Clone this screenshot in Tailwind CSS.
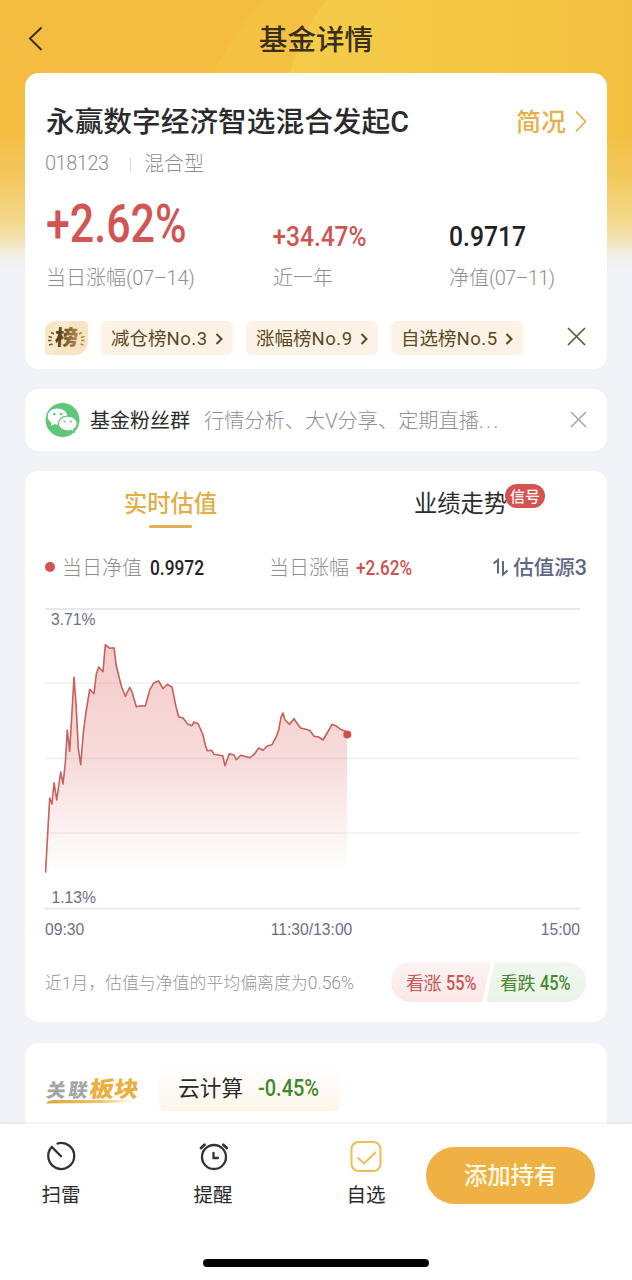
<!DOCTYPE html>
<html lang="zh-CN">
<head>
    <meta charset="UTF-8">
    <meta name="viewport" content="width=device-width, initial-scale=1.0">
    <title>基金详情</title>
    <script src="https://cdn.jsdelivr.net/npm/@tailwindcss/browser@4"></script>
</head>
<body class="bg-[#f2f3f9] font-[Roboto,'Noto_Sans_CJK_SC',sans-serif] text-[#2b2b2d]">
    <div class="relative flex h-[1280px] w-[632px] flex-col overflow-hidden">
        <!-- Header background -->
        <svg class="absolute inset-x-0 top-0 -z-10" width="632" height="270" viewBox="0 0 632 270">
            <defs>
                <linearGradient id="sheen" x1="0" x2="1">
                    <stop offset="0" stop-color="#f5cb49"/>
                    <stop offset=".5" stop-color="#f4c845"/>
                    <stop offset="1" stop-color="#f3bf40"/>
                </linearGradient>
                <linearGradient id="fade" x1="0" x2="0" y1="0" y2="1">
                    <stop offset="0" stop-color="#f2f3f9" stop-opacity="0"/>
                    <stop offset=".3" stop-color="#f3e3a8" stop-opacity=".25"/>
                    <stop offset=".65" stop-color="#f3e0a0" stop-opacity=".8"/>
                    <stop offset=".9" stop-color="#f2efe6"/>
                    <stop offset="1" stop-color="#f2f3f9"/>
                </linearGradient>
            </defs>
            <rect width="632" height="270" fill="#f4bd41"/>
            <path d="M266 0Q230 35 214 73V270H632V0Z" fill="#f5c143"/>
            <path d="M326 0Q300 35 290 73V270H632V0Z" fill="url(#sheen)"/>
            <rect y="135" width="632" height="135" fill="url(#fade)"/>
        </svg>

        <!-- Header -->
        <header class="grid h-[73px] shrink-0 grid-cols-3 items-center px-7 pt-1 text-[#38301b]">
            <svg width="16" height="26" viewBox="0 0 16 26" fill="none" stroke="currentColor" stroke-width="2"><path d="M13.500 1.500 2 12.500l11.500 11.500"/></svg>
            <h1 class="pt-1.5 text-center text-[28.500px] leading-none font-medium whitespace-nowrap">基金详情</h1>
        </header>

        <!-- Fund summary -->
        <section class="mx-[25px] flex h-[296px] shrink-0 flex-col rounded-[14px] bg-white px-[21px] pt-[31px]">
            <div class="flex h-9 items-center justify-between">
                <h2 class="text-[28.700px] leading-none font-medium whitespace-nowrap">永赢数字经济智选混合发起C</h2>
                <div class="flex items-center gap-2 text-[#e6b04a]">
                    <span class="text-[25px] leading-none font-medium">简况</span>
                    <svg class="-mr-0.5" width="14" height="22" viewBox="0 0 14 22" fill="none" stroke="currentColor" stroke-width="1.800"><path d="m2 .5 9.500 10-9.500 10"/></svg>
                </div>
            </div>
            <div class="mt-3 flex h-6 items-center text-[20px] leading-none font-light text-[#8f8f8f]">
                <span class="-ml-px w-[85px] pb-0.5 text-[20px] tracking-[-.5px]">018123</span>
                <span class="mr-[13px] h-[15px] w-px bg-[#dddddd]"></span>
                <span>混合型</span>
            </div>
            <div class="mt-[22px] grid h-[48px] grid-cols-[227px_176px_1fr] items-end">
                <svg class="overflow-visible" width="145" height="46" viewBox="0 0 145 46"><text x="0" y="41.500" class="fill-[#d35552] text-[53px] font-medium" textLength="140.500" lengthAdjust="spacingAndGlyphs">+2.62%</text></svg>
                <svg class="overflow-visible" width="100" height="30" viewBox="0 0 100 30"><text x="-.5" y="30" class="fill-[#cf5553] text-[28px] font-medium" textLength="94" lengthAdjust="spacingAndGlyphs">+34.47%</text></svg>
                <svg class="overflow-visible" width="90" height="30" viewBox="0 0 90 30"><text x="0" y="29.500" class="fill-[#222224] text-[28px] font-medium" textLength="77" lengthAdjust="spacingAndGlyphs">0.9717</text></svg>
            </div>
            <div class="mt-[20px] grid h-6 grid-cols-[227px_176px_1fr] items-center text-[20px] leading-none font-light whitespace-nowrap text-[#8f8f8f]">
                <span>当日涨幅<span class="tracking-[-.25px]">(07–14)</span></span>
                <span>近一年</span>
                <span>净值<span class="tracking-[-.7px]">(07–11)</span></span>
            </div>
            <div class="mt-[31px] flex h-[34px] items-center gap-[13px] text-[18.500px] leading-none text-[#5e4922]">
                <svg class="-ml-px" width="43" height="34" viewBox="0 0 43 34">
                    <defs><linearGradient id="rank"><stop stop-color="#4a3216"/><stop offset="1" stop-color="#b58a4c"/></linearGradient></defs>
                    <path d="M12 0H38Q43 0 43 5V18Q43 34 29 34H5Q0 34 0 29V12Q0 0 12 0Z" fill="#f8e4c0"/>
                    <path d="M14 0 0 18V29Q0 34 5 34H8L26 0Z" fill="#faebd0"/>
                    <text x="11" y="24.500" class="text-[21px] font-black" fill="url(#rank)" transform="skewX(-3)" textLength="23" lengthAdjust="spacingAndGlyphs">榜</text>
                    <g fill="none" stroke="#765526" stroke-width="1.400"><path d="M6 11.500l3 1.500M3.500 15.500l3.500 1M3 19.500h3.500M4 24l3.500-1"/><path d="M37 11.500l-3 1.500M39.500 15.500l-3.500 1M39.500 19.500H36M38.500 24l-3-1" stroke="#b08a50"/></g>
                </svg>
                <div class="flex h-full w-[132px] items-center justify-between rounded-md bg-[#fcf3e6] pt-0.5 pr-[9px] pl-[10px] whitespace-nowrap">
                    <span>减仓榜<span class="tracking-[.5px]">No.3</span></span>
                    <svg width="9" height="14" viewBox="0 0 9 14" fill="none" stroke="currentColor" stroke-width="2"><path d="m1.500 2 5 5-5 5"/></svg>
                </div>
                <div class="flex h-full w-[132px] items-center justify-between rounded-md bg-[#fcf3e6] pt-0.5 pr-[9px] pl-[10px] whitespace-nowrap">
                    <span>涨幅榜<span class="tracking-[.5px]">No.9</span></span>
                    <svg width="9" height="14" viewBox="0 0 9 14" fill="none" stroke="currentColor" stroke-width="2"><path d="m1.500 2 5 5-5 5"/></svg>
                </div>
                <div class="flex h-full w-[132px] items-center justify-between rounded-md bg-[#fcf3e6] pt-0.5 pr-[9px] pl-[10px] whitespace-nowrap">
                    <span>自选榜<span class="tracking-[.5px]">No.5</span></span>
                    <svg width="9" height="14" viewBox="0 0 9 14" fill="none" stroke="currentColor" stroke-width="2"><path d="m1.500 2 5 5-5 5"/></svg>
                </div>
                <svg class="mb-1 ml-auto" width="19" height="19" viewBox="0 0 19 19" fill="none" stroke="#6b5330" stroke-width="1.700"><path d="m1 1 17 17M18 1 1 18"/></svg>
            </div>
        </section>

        <!-- Fan group -->
        <section class="mx-[25px] mt-5 flex h-[62px] shrink-0 items-center rounded-[14px] bg-white px-[20px] text-[20px] leading-none whitespace-nowrap">
            <svg width="35" height="35" viewBox="0 0 35 35">
                <circle cx="17.500" cy="17" r="17" fill="#5fc878"/>
                <path d="M12.500 5.500C7 5.500 2.700 9 2.700 13.500c0 2.600 1.400 4.800 3.700 6.300l-.5 3.200 3.600-1.900c1.100.4 1.900.5 3.100.5 5.600 0 9.700-3.500 9.700-8S18.100 5.500 12.500 5.500Z" fill="#fff"/>
                <path d="M22.800 13.100c-5.500 0-9.500 3.400-9.500 7.500s4 7.400 9.500 7.400c1.200 0 2.300-.2 3.300-.5l3.200 1.700-.7-2.900c2.200-1.300 3.600-3.400 3.600-5.700 0-4.100-3.900-7.500-9.400-7.500Z" fill="#fff" stroke="#5fc878" stroke-width="1.200"/>
                <g fill="#5fc878"><circle cx="9.300" cy="11" r="1.300"/><circle cx="16" cy="11" r="1.300"/><circle cx="19.500" cy="18.500" r="1.100"/><circle cx="25.800" cy="18.500" r="1.100"/></g>
            </svg>
            <span class="ml-[10px] pt-0.5">基金粉丝群</span>
            <span class="ml-[14px] pt-0.5 text-[20.200px] font-light text-[#8f8f8f]">行情分析、大V分享、定期直播<span class="tracking-[2.500px]">...</span></span>
            <svg class="mb-0.5 ml-auto" width="17" height="17" viewBox="0 0 17 17" fill="none" stroke="#a5a5a5" stroke-width="1.500"><path d="m1 1 15 15M16 1 1 16"/></svg>
        </section>

        <!-- Valuation chart -->
        <section class="mx-[25px] mt-5 flex h-[551px] shrink-0 flex-col rounded-[14px] bg-white px-[20px]">
            <div class="-mx-[20px] grid h-[60px] grid-cols-2 justify-items-center pt-[22px] text-[23.300px] leading-none">
                <div class="flex flex-col items-center gap-[9px] font-medium text-[#e3ae48]">
                    <span>实时估值</span>
                    <span class="h-[3px] w-[43px] rounded-full bg-[#e2b052]"></span>
                </div>
                <div class="relative -left-px">
                    <span>业绩走势</span>
                    <span class="absolute -top-[9px] left-[91px] flex h-6 w-[40px] items-center justify-center rounded-full bg-[#d35350] pt-0.5 text-[15px] font-medium text-white">信号</span>
                </div>
            </div>
            <div class="mt-[24px] flex h-6 items-center text-[20px] leading-none font-light whitespace-nowrap text-[#8f8f8f]">
                <span class="mr-[7px] size-[10px] rounded-full bg-[#d35350]"></span>
                <span class="pt-0.5">当日净值</span>
                <svg class="ml-[8px] overflow-visible" width="119" height="24" viewBox="0 0 119 24"><text x="0" y="19.500" class="fill-[#222224] text-[20.500px] font-medium" textLength="54" lengthAdjust="spacingAndGlyphs">0.9972</text></svg>
                <span class="pt-0.5">当日涨幅</span>
                <svg class="ml-[7px] overflow-visible" width="60" height="24" viewBox="0 0 60 24"><text x="0" y="19.500" class="fill-[#cb5250] text-[20.500px] font-medium" textLength="56" lengthAdjust="spacingAndGlyphs">+2.62%</text></svg>
                <div class="ml-auto flex items-center gap-[4px] font-medium text-[#5f6883]">
                    <svg width="16" height="20" viewBox="0 0 16 20" fill="none" stroke="currentColor" stroke-width="2"><path d="M.5 6.500 5 3v13.500M10 4v13.500l4.500-4"/></svg>
                    <span class="pt-0.5 text-[20.500px]">估值源<span class="text-[21.500px]">3</span></span>
                </div>
            </div>
            <svg class="mt-[21px] shrink-0" width="541" height="345" viewBox="0 0 541 345">
                <defs>
                    <linearGradient id="area" gradientUnits="userSpaceOnUse" x1="0" x2="0" y1="45" y2="272">
                        <stop offset="0" stop-color="#d9534f" stop-opacity=".3"/>
                        <stop offset=".5" stop-color="#d9534f" stop-opacity=".21"/>
                        <stop offset="1" stop-color="#d9534f" stop-opacity="0"/>
                    </linearGradient>
                </defs>
                <path d="M0 83H535M0 158.500H535M0 233H535" stroke="#f0f0f2" stroke-width="1.500"/>
                <path d="M0 9H535M0 308.500H535" stroke="#e1e1e4" stroke-width="1.500"/>
                <path id="areaPath" fill="url(#area)"/>
                <path id="linePath" fill="none" stroke="#c9605b" stroke-width="1.600" stroke-linejoin="round"/>
                <circle cx="302.300" cy="134.500" r="4" fill="#d14f4c"/>
                <g class="fill-[#6b7084] font-['Liberation_Sans'] text-[15.700px]">
                    <text x="6" y="25">3.71%</text>
                    <text x="6.500" y="302.500">1.13%</text>
                    <text x="0" y="334.500">09:30</text>
                    <text x="266.500" y="334.500" text-anchor="middle">11:30/13:00</text>
                    <text x="535" y="334.500" text-anchor="end">15:00</text>
                </g>
            </svg>
            <div class="mt-[17px] flex h-10 items-center justify-between">
                <span class="pt-1 text-[16.900px] leading-none font-light whitespace-nowrap text-[#969696]">近1月，估值与净值的平均偏离度为<span class="text-[17.500px]">0.56%</span></span>
                <svg width="196" height="40" viewBox="0 0 196 40">
                    <defs>
                        <linearGradient id="up" x1="0" x2="0" y1="0" y2="1"><stop stop-color="#fcf3f3"/><stop offset="1" stop-color="#fae7e7"/></linearGradient>
                        <linearGradient id="down" x1="0" x2="0" y1="0" y2="1"><stop stop-color="#f2f8f1"/><stop offset="1" stop-color="#e8f3e6"/></linearGradient>
                    </defs>
                    <path d="M20 0H97Q100 0 99.300 3L92 37Q91.300 40 88.500 40H20A20 20 0 0 1 20 0Z" fill="url(#up)"/>
                    <path d="M106 0H175A20 20 0 0 1 175 40H98Q95 40 95.700 37L102.500 3Q103.200 0 106 0Z" fill="url(#down)"/>
                    <g class="text-[18px]" fill="#c95855">
                        <text x="15" y="27.500" textLength="35.500">看涨</text>
                        <text x="55" y="28" class="text-[20px] font-medium" textLength="30.500" lengthAdjust="spacingAndGlyphs">55%</text>
                    </g>
                    <g class="text-[18px]" fill="#47892f">
                        <text x="109" y="27.500" textLength="35.500">看跌</text>
                        <text x="149" y="28" class="text-[20px] font-medium" textLength="30.500" lengthAdjust="spacingAndGlyphs">45%</text>
                    </g>
                </svg>
            </div>
        </section>

        <!-- Related sectors -->
        <section class="mx-[25px] mt-[21px] flex h-[100px] shrink-0 items-start rounded-t-[14px] bg-white px-[20px] pt-[23px]">
            <svg class="mt-2 overflow-visible" width="96" height="32" viewBox="0 0 96 32">
                <defs><linearGradient id="swoosh"><stop stop-color="#e0a63a"/><stop offset=".6" stop-color="#f0c469"/><stop offset="1" stop-color="#f7d58a" stop-opacity=".2"/></linearGradient></defs>
                <path d="M1 29.500Q3 26 9 26H90Q82 28.500 60 29Z" fill="url(#swoosh)"/>
                <g transform="skewX(-8)" class="font-black">
                    <text x="4" y="23" class="text-[19px]" fill="#a5a5a5" textLength="41">关联</text>
                    <text x="47" y="23.500" class="text-[22px]" fill="#ecae40" textLength="49" lengthAdjust="spacingAndGlyphs">板块</text>
                </g>
            </svg>
            <div class="ml-[18px] flex h-[45px] w-[181px] items-center rounded-md bg-linear-to-b from-white to-[#fdf5e8] pl-[19px]">
                <span class="text-[21.700px] leading-none">云计算</span>
                <svg class="mb-0.5 ml-[15px] overflow-visible" width="64" height="30" viewBox="0 0 64 30"><text x="0" y="23" class="fill-[#42882c] text-[24px] font-medium" textLength="61" lengthAdjust="spacingAndGlyphs">-0.45%</text></svg>
            </div>
        </section>

        <!-- Bottom bar -->
        <nav class="absolute inset-x-0 bottom-0 flex h-[156px] flex-col bg-white shadow-[0_-1px_3px_rgba(0,0,0,0.08)]">
            <div class="flex h-[103px] items-start pt-[16px] pl-[21px] text-[19.500px] leading-none">
                <div class="flex w-20 flex-col items-center gap-[14px]">
                    <svg width="32" height="32" viewBox="0 0 32 32" fill="none" stroke="#333" stroke-width="2.300" stroke-linecap="round"><path d="M12.500 3.500A13 13 0 1 1 6.800 7L16 16.300"/></svg>
                    <span>扫雷</span>
                </div>
                <div class="ml-[72px] flex w-20 flex-col items-center gap-[14px]">
                    <svg width="32" height="32" viewBox="0 0 32 32" fill="none" stroke="#333" stroke-width="2.300" stroke-linecap="round"><circle cx="17" cy="17" r="12"/><path d="M16.500 13v5h4.500"/><path d="M4 8l3.500-3.200M29.800 8l-3.500-3.200" stroke-width="2.800"/></svg>
                    <span>提醒</span>
                </div>
                <div class="ml-[73px] flex w-20 flex-col items-center gap-[14px]">
                    <svg width="32" height="32" viewBox="0 0 32 32" fill="none" stroke="#edbd55" stroke-width="2"><rect x="1.500" y="2" width="29" height="29" rx="7"/><path d="m7.500 17.500 6.500 6L26 12"/></svg>
                    <span>自选</span>
                </div>
                <button class="mt-[7px] ml-[20px] h-[57px] w-[169px] rounded-full bg-[#efb144] pt-0.5 text-[23.300px] leading-none font-medium text-[#fffbe6]">添加持有</button>
            </div>
            <div class="mx-auto mt-[32px] h-2 w-[226px] rounded-full bg-black"></div>
        </nav>
    </div>

    <script>
        // [x, y] of each intraday sample
        const points = [
            [0.5, 272.7], [4.7, 198], [7, 204], [9, 182.7], [11.7, 200], [15.7, 172], [18, 184], [20.3, 163],
            [22.3, 130], [24.7, 151.3], [29, 77.3], [31, 103], [33.3, 148], [35.7, 164.7], [38.3, 133], [41, 112],
            [44.7, 89.3], [49, 93.7], [51.3, 74], [53.7, 67], [58, 71.7], [60.3, 44.7], [64.7, 48.3], [69, 47.7],
            [71.3, 66], [76.3, 86], [80.3, 96.3], [84.7, 87.3], [87, 92], [91.3, 106.7], [95.7, 105.7], [100.3, 106],
            [105, 89.3], [109, 82.7], [113.7, 81], [118, 88.7], [122.3, 84.3], [127, 87], [131, 106.7], [133.7, 116.7],
            [138, 118], [142.7, 124], [147, 125.7], [149, 122], [153.3, 124], [158, 135], [160.3, 145], [162.3, 150.7],
            [166.7, 150.3], [169, 154.3], [177.7, 155.7], [180, 165.7], [184.3, 153.7], [189, 155], [191.3, 159.7],
            [195.7, 155.3], [204.7, 157.7], [209.3, 154.3], [213.7, 148], [218, 150.3], [222.3, 146], [227, 144.7],
            [231.3, 136.7], [233.7, 130], [236, 117.3], [238, 113], [240, 120], [244.7, 124.3], [249, 118.7],
            [252.7, 124.3], [255.7, 128], [264.7, 130.3], [269, 136.3], [273.7, 137], [278, 140], [282.7, 132],
            [287, 124.3], [291.3, 126], [295.7, 129.3], [302, 132]
        ];
        const line = 'M' + points.map(p => p.join(' ')).join('L');
        document.getElementById('linePath').setAttribute('d', line);
        document.getElementById('areaPath').setAttribute('d', line + 'V272H0.5Z');
    </script>
</body>
</html>
